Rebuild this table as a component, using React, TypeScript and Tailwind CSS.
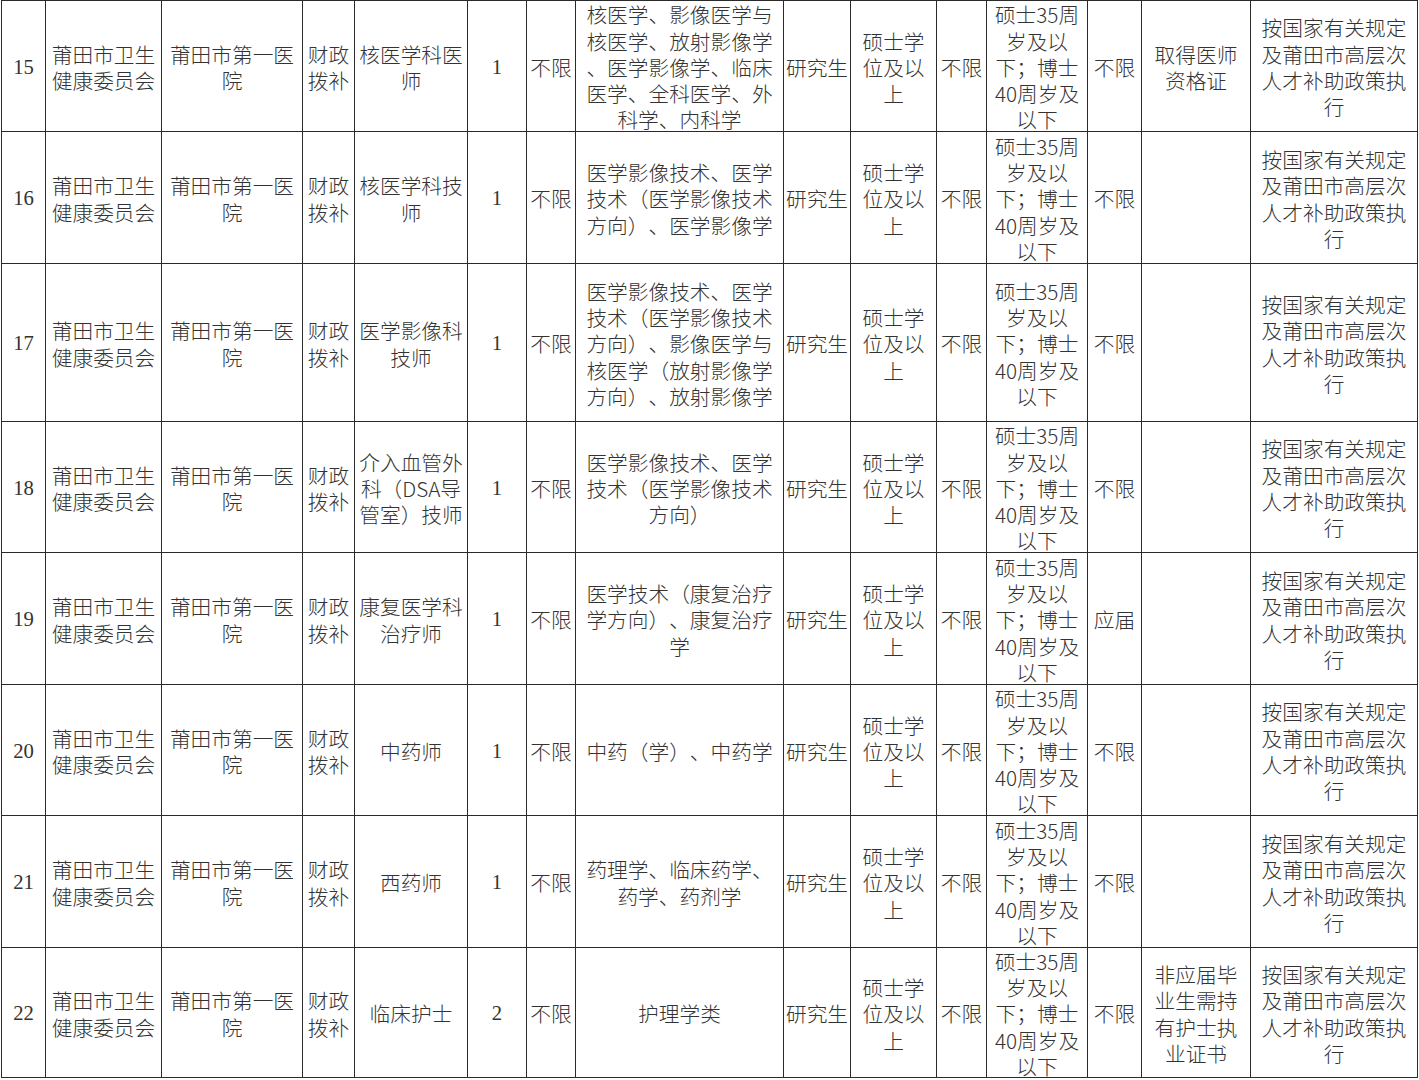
const CJK = "font-['Noto_Sans_CJK_SC',sans-serif]";
const NUM = "font-['Liberation_Serif','Noto_Sans_CJK_SC',serif]";

const age = ["硕士35周", "岁及以", "下；博士", "40周岁及", "以下"];
const degree = ["硕士学", "位及以", "上"];
const policy = ["按国家有关规定", "及莆田市高层次", "人才补助政策执", "行"];

type Row = {
  no: string;
  post: string[];
  count: string;
  major: string[];
  fresh: string;
  other: string[];
};

const rows: Row[] = [
  {
    no: "15",
    post: ["核医学科医", "师"],
    count: "1",
    major: ["核医学、影像医学与", "核医学、放射影像学", "、医学影像学、临床", "医学、全科医学、外", "科学、内科学"],
    fresh: "不限",
    other: ["取得医师", "资格证"],
  },
  {
    no: "16",
    post: ["核医学科技", "师"],
    count: "1",
    major: ["医学影像技术、医学", "技术（医学影像技术", "方向）、医学影像学"],
    fresh: "不限",
    other: [],
  },
  {
    no: "17",
    post: ["医学影像科", "技师"],
    count: "1",
    major: ["医学影像技术、医学", "技术（医学影像技术", "方向）、影像医学与", "核医学（放射影像学", "方向）、放射影像学"],
    fresh: "不限",
    other: [],
  },
  {
    no: "18",
    post: ["介入血管外", "科（DSA导", "管室）技师"],
    count: "1",
    major: ["医学影像技术、医学", "技术（医学影像技术", "方向）"],
    fresh: "不限",
    other: [],
  },
  {
    no: "19",
    post: ["康复医学科", "治疗师"],
    count: "1",
    major: ["医学技术（康复治疗", "学方向）、康复治疗", "学"],
    fresh: "应届",
    other: [],
  },
  {
    no: "20",
    post: ["中药师"],
    count: "1",
    major: ["中药（学）、中药学"],
    fresh: "不限",
    other: [],
  },
  {
    no: "21",
    post: ["西药师"],
    count: "1",
    major: ["药理学、临床药学、", "药学、药剂学"],
    fresh: "不限",
    other: [],
  },
  {
    no: "22",
    post: ["临床护士"],
    count: "2",
    major: ["护理学类"],
    fresh: "不限",
    other: ["非应届毕", "业生需持", "有护士执", "业证书"],
  },
];

const Cell = ({ lines, num = false }: { lines: string[]; num?: boolean }) => (
  <div
    className={`flex flex-col items-center justify-center border-r border-b border-[#2a2a2a] pt-[2px] text-center whitespace-nowrap ${
      num ? NUM : CJK
    }`}
  >
    {lines.map((l, i) => (
      <span key={i}>{l}</span>
    ))}
  </div>
);

const App = () => {
  return (
    <div className="min-h-[1080px] bg-white">
      <div className="ml-px grid w-max grid-cols-[44px_116px_141px_52px_113px_59px_49px_208px_67px_86px_50px_101px_54px_109px_167px] grid-rows-[131px_132px_158px_131px_132px_131px_132px_130px] border-t border-l border-[#2a2a2a] text-[20.7px] leading-[26.3px] font-light text-[#333333] [text-spacing-trim:space-all]">
        {rows.map((r) => (
          <div key={r.no} className="contents">
            <Cell lines={[r.no]} num />
            <Cell lines={["莆田市卫生", "健康委员会"]} />
            <Cell lines={["莆田市第一医", "院"]} />
            <Cell lines={["财政", "拨补"]} />
            <Cell lines={r.post} />
            <Cell lines={[r.count]} num />
            <Cell lines={["不限"]} />
            <Cell lines={r.major} />
            <Cell lines={["研究生"]} />
            <Cell lines={degree} />
            <Cell lines={["不限"]} />
            <Cell lines={age} />
            <Cell lines={[r.fresh]} />
            <Cell lines={r.other} />
            <Cell lines={policy} />
          </div>
        ))}
      </div>
    </div>
  );
};

export default App;
